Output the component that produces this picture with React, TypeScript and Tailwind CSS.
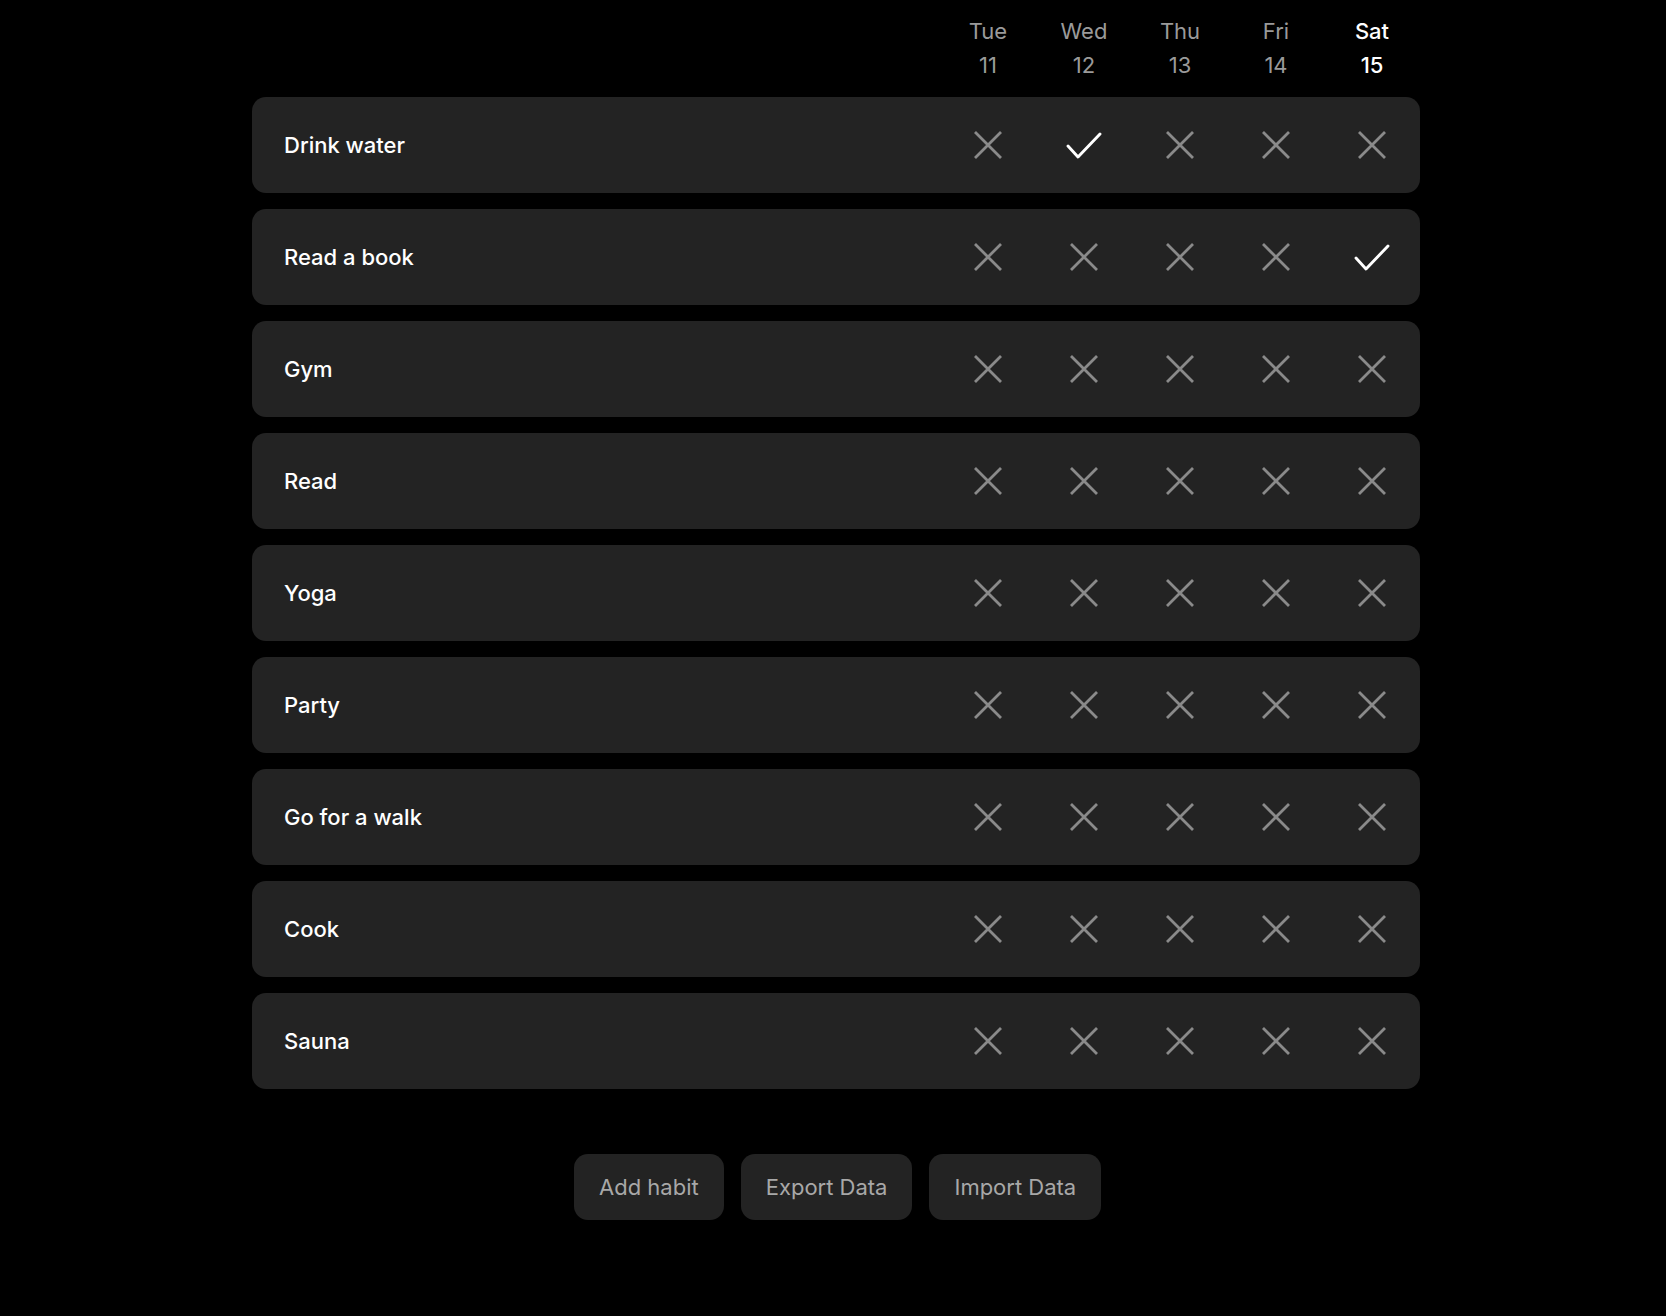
import React from "react";

const days = [
  { d: "Tue", n: "11" },
  { d: "Wed", n: "12" },
  { d: "Thu", n: "13" },
  { d: "Fri", n: "14" },
  { d: "Sat", n: "15", today: true },
];

const habits: { name: string; done: number[] }[] = [
  { name: "Drink water", done: [1] },
  { name: "Read a book", done: [4] },
  { name: "Gym", done: [] },
  { name: "Read", done: [] },
  { name: "Yoga", done: [] },
  { name: "Party", done: [] },
  { name: "Go for a walk", done: [] },
  { name: "Cook", done: [] },
  { name: "Sauna", done: [] },
];

function XIcon() {
  return (
    <svg width="30" height="30" viewBox="0 0 30 30" fill="none">
      <path d="M2 2 L28 28 M28 2 L2 28" stroke="#8a8a8a" strokeWidth="2.8" strokeLinecap="butt" />
    </svg>
  );
}

function CheckIcon() {
  return (
    <svg width="36" height="30" viewBox="0 0 36 30" fill="none">
      <path d="M2 16 L12 27 L34 4" stroke="#ffffff" strokeWidth="2.9" strokeLinecap="round" strokeLinejoin="round" />
    </svg>
  );
}

export default function App() {
  return (
    <div
      className="min-h-[1316px] w-full bg-black pl-[252px] pt-[14px]"
      style={{ fontFamily: "Inter, 'Noto Sans', sans-serif" }}
    >
      <div className="w-[1168px]">
        <div className="flex justify-end">
          {days.map((d) => (
            <div
              key={d.d}
              className={`flex w-24 flex-col items-center text-[22px] leading-[34px] ${d.today ? "text-white font-medium" : "text-[#9a9a9a]"}`}
            >
              <span>{d.d}</span>
              <span>{d.n}</span>
            </div>
          ))}
        </div>
        <div className="mt-[15px] flex flex-col gap-4">
          {habits.map((h) => (
            <div key={h.name} className="flex h-24 items-center rounded-[14px] bg-[#232323] pl-8">
              <div className="flex-1 text-[22px] font-medium text-white">{h.name}</div>
              {days.map((_, i) => (
                <div key={i} className="flex w-24 items-center justify-center">
                  {h.done.includes(i) ? <CheckIcon /> : <XIcon />}
                </div>
              ))}
            </div>
          ))}
        </div>
      </div>
      <div className="mt-[65px] flex gap-[17px] pl-[322px]">
        {["Add habit", "Export Data", "Import Data"].map((b) => (
          <button
            key={b}
            className="h-[66px] rounded-[14px] bg-[#232323] px-[25px] text-[22px] text-[#a8a8a8]"
          >
            {b}
          </button>
        ))}
      </div>
    </div>
  );
}
